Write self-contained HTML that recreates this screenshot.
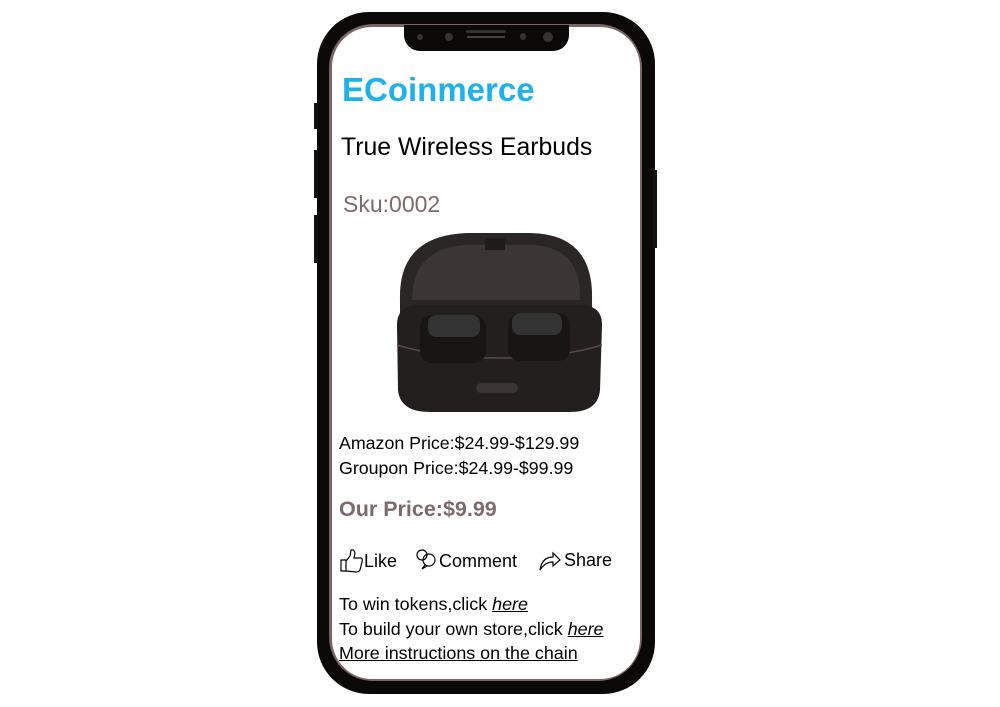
<!DOCTYPE html>
<html><head><style>
body{margin:0;width:1000px;height:707px;background:#fff;position:relative;overflow:hidden;font-family:"Liberation Sans",Arial,sans-serif}
.a{position:absolute}
.phone{left:317px;top:12px;width:338px;height:682px;border-radius:52px;background:#0b0808;}
.ring{left:329px;top:24px;width:313px;height:657px;border-radius:44px;background:#7a6464}
.screen{left:332px;top:27px;width:308px;height:652px;border-radius:40px;background:#fff}
.notch{left:404px;top:25px;width:165px;height:26px;background:#0b0808;border-radius:0 0 16px 16px}
.btn{background:#111;width:4px}
.t{position:absolute;white-space:nowrap;color:#000}
u{text-decoration:underline}
</style></head><body>
<div class="a phone"></div>
<div class="a btn" style="left:314px;top:103px;height:26px"></div>
<div class="a btn" style="left:314px;top:150px;height:48px"></div>
<div class="a btn" style="left:314px;top:215px;height:48px"></div>
<div class="a btn" style="left:653px;top:170px;height:78px"></div>
<div class="a ring"></div>
<div class="a screen"></div>
<div class="a notch"></div>
<div class="a" style="left:466px;top:30px;width:40px;height:3px;background:#333;border-radius:2px"></div>
<div class="a" style="left:467px;top:36px;width:38px;height:2px;background:#444"></div>
<div class="a" style="left:417px;top:34px;width:6px;height:6px;border-radius:50%;background:#333"></div>
<div class="a" style="left:445px;top:33px;width:8px;height:8px;border-radius:50%;background:#333"></div>
<div class="a" style="left:520px;top:33px;width:6px;height:7px;border-radius:50%;background:#333"></div>
<div class="a" style="left:543px;top:32px;width:10px;height:10px;border-radius:50%;background:#333"></div>

<div class="t" style="left:342px;top:71px;font-size:33px;font-weight:bold;color:#1fb2ea">ECoinmerce</div>
<div class="t" style="left:341px;top:134px;font-size:24.8px">True Wireless Earbuds</div>
<div class="t" style="left:343px;top:191px;font-size:23px;color:#7d6b6b">Sku:0002</div>

<svg class="a" style="left:0;top:0" width="1000" height="707">
<path d="M400 300 Q398 234 470 233 L530 233 Q594 234 592 300 L592 318 L400 318 Z" fill="#2a2626"/>
<path d="M412 300 Q412 246 470 245 L530 245 Q582 246 580 300 Z" fill="#3b3535"/>
<rect x="485" y="238" width="20" height="12" fill="#1e1b1b"/>
<path d="M397 325 Q397 305 420 305 L580 305 Q602 305 602 325 L600 390 Q598 412 570 412 L430 412 Q400 412 398 390 Z" fill="#231f1f"/>
<path d="M397 345 Q440 358 500 358 Q560 358 602 345" stroke="#5a4848" fill="none" stroke-width="1.5"/>
<rect x="420" y="315" width="66" height="48" rx="12" fill="#181515"/>
<rect x="428" y="315" width="52" height="22" rx="8" fill="#333"/>
<rect x="508" y="313" width="62" height="48" rx="12" fill="#181515"/>
<rect x="512" y="313" width="50" height="22" rx="8" fill="#333"/>
<rect x="476" y="383" width="42" height="10" rx="5" fill="#3a3434"/>
<g stroke="#000" fill="none" stroke-width="1.2">
<path d="M341 571 L341 560 L346 560 L346 571 Z M346 561 L350 556 L351 550 Q354 549 355 553 L354 558 L361 558 Q363 559 362 562 L360 570 Q359 572 356 572 L346 571"/>
<circle cx="422" cy="555" r="5"/><circle cx="429" cy="560" r="6"/><path d="M425 565 L422 569 L427 566"/>
<path d="M540 570 Q542 557 553 557 L553 553 L560 560 L553 566 L553 562 Q545 562 540 570 Z"/>
</g>
</svg>

<div class="t" style="left:339px;top:433px;font-size:17.8px">Amazon Price:$24.99-$129.99</div>
<div class="t" style="left:339px;top:458px;font-size:17.8px">Groupon Price:$24.99-$99.99</div>
<div class="t" style="left:339px;top:497px;font-size:21.5px;font-weight:bold;color:#7d6b6b">Our Price:$9.99</div>
<div class="t" style="left:364px;top:551px;font-size:18px">Like</div>
<div class="t" style="left:439px;top:551px;font-size:18px">Comment</div>
<div class="t" style="left:564px;top:550px;font-size:18px">Share</div>
<div class="t" style="left:339px;top:594px;font-size:17.9px">To win tokens,click <i><u>here</u></i></div>
<div class="t" style="left:339px;top:619px;font-size:17.9px">To build your own store,click <i><u>here</u></i></div>
<div class="t" style="left:339px;top:643px;font-size:17.9px"><u>More instructions on the chain</u></div>
</body></html>
